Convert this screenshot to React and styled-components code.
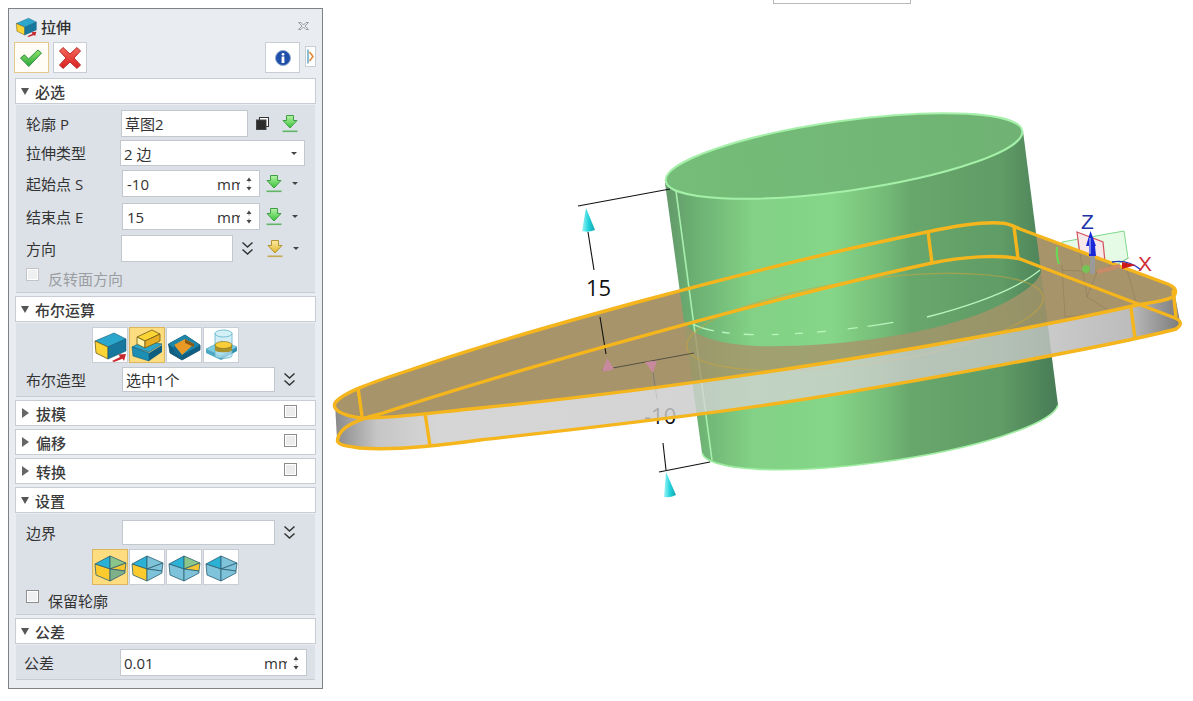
import React from "react";
import styled, { createGlobalStyle } from "styled-components";

const GlobalStyle = createGlobalStyle`
  html, body {
    margin: 0;
    padding: 0;
    background: #fff;
  }
  * {
    box-sizing: border-box;
  }
`;

const Page = styled.div`
  display: flex;
  width: 1193px;
  height: 701px;
  overflow: hidden;
  background: #fff;
  font-family: "Open Sans", "Noto Sans CJK SC", sans-serif;
  color: #333;
`;

const Panel = styled.div`
  flex: none;
  width: 315px;
  height: 681px;
  margin: 8px 0 0 8px;
  padding: 0 6px;
  background: #e9ecf0;
  border: 1px solid #7f8285;
`;

const TitleBar = styled.div`
  display: flex;
  align-items: center;
  height: 33px;
  padding-top: 1px;
`;

const Title = styled.span`
  margin-left: 4px;
  font-size: 15px;
  font-weight: 500;
  color: #2f2f2f;
`;

const Close = styled.span`
  display: flex;
  margin-left: auto;
  margin-right: 7px;
`;

const Toolbar = styled.div`
  display: flex;
  align-items: flex-start;
  gap: 4px;
  height: 36px;
  margin-left: -1px;
`;

const ToolButton = styled.div`
  display: flex;
  align-items: center;
  justify-content: center;
  width: 35px;
  height: 31px;
  background: ${(p) => (p.$active ? "#fffdf6" : "#fff")};
  border: 1px solid ${(p) => (p.$active ? "#e3c88a" : "#c9ced4")};
  margin-left: ${(p) => p.$ml || 0}px;
`;

const MiniButton = styled.div`
  display: flex;
  align-items: center;
  justify-content: center;
  width: 11px;
  height: 21px;
  margin-top: 4px;
  margin-left: 1px;
  background: #fff;
  border: 1px solid #c9ced4;
`;

const Section = styled.section`
  margin-bottom: 3px;
`;

const SectionHead = styled.div`
  display: flex;
  align-items: center;
  height: 26px;
  padding: 0 18px 0 5px;
  background: #fff;
  border: 1px solid #c8cdd3;
  font-size: 15px;
  font-weight: 500;
  color: #3a3a3a;
`;

const Arrow = styled.span`
  width: 0;
  height: 0;
  margin-right: 6px;
  ${(p) =>
    p.$open
      ? `
    margin-left: 0;
    border-left: 4.5px solid transparent;
    border-right: 4.5px solid transparent;
    border-top: 7px solid #555;
    `
      : `
    margin-left: 1px;
    border-top: 5px solid transparent;
    border-bottom: 5px solid transparent;
    border-left: 7px solid #666;
    margin-right: 7px;
    `}
`;

const HeadCheck = styled.span`
  width: 13px;
  height: 13px;
  margin-left: auto;
  margin-top: -3px;
  background: #ececec;
  border: 1px solid #8c8c8c;
  box-shadow: inset 0 0 0 1px #fff;
`;

const SectionBody = styled.div`
  height: ${(p) => p.$h}px;
  margin: 1px 1px 0;
  padding-top: ${(p) => p.$pt || 5}px;
  background: #dce1e7;
  border-bottom: 1px solid #c8cdd3;
`;

const Row = styled.div`
  display: flex;
  align-items: center;
  margin-top: ${(p) => p.$mt || 0}px;
  padding-left: ${(p) => p.$pl || 10}px;
`;

const Label = styled.span`
  flex: none;
  width: ${(p) => p.$w}px;
  font-size: 15px;
  line-height: 20px;
  color: #333;
`;

const Field = styled.div`
  display: flex;
  align-items: center;
  flex: none;
  width: ${(p) => p.$w}px;
  height: ${(p) => p.$h || 27}px;
  padding: 0 7px 0 ${(p) => p.$pad || 3}px;
  background: #fff;
  border: 1px solid #c3c8cf;
  font-size: 15px;
  color: #333;
`;

const Value = styled.span`
  flex: 1;
  white-space: nowrap;
`;

const Unit = styled.span`
  flex: none;
  width: 23px;
  overflow: hidden;
  white-space: nowrap;
`;

const Caret = styled.span`
  flex: none;
  width: 0;
  height: 0;
  margin-left: ${(p) => p.$ml || 0}px;
  border-left: 3px solid transparent;
  border-right: 3px solid transparent;
  border-top: 3px solid #444;
`;

const Slot = styled.span`
  display: flex;
  flex: none;
  margin-left: ${(p) => p.$ml || 0}px;
`;

const CheckRow = styled.div`
  display: flex;
  align-items: center;
  height: 20px;
  margin-top: ${(p) => p.$mt || 0}px;
  padding-left: 10px;
  font-size: 15px;
  color: ${(p) => (p.$muted ? "#9a9da1" : "#333")};
`;

const CheckBox = styled.span`
  width: 13px;
  height: 13px;
  margin-right: 9px;
  margin-top: -8px;
  background: #eef0f2;
  border: 1px solid ${(p) => (p.$muted ? "#c2c4c7" : "#8f8f8f")};
  box-shadow: inset 0 0 0 1px #fff;
`;

const IconGrid = styled.div`
  display: flex;
  gap: 1px;
  margin-top: ${(p) => p.$mt || 0}px;
  padding-left: 76px;
`;

const IconButton = styled.div`
  display: flex;
  align-items: center;
  justify-content: center;
  width: 36px;
  height: 36px;
  background: ${(p) => (p.$active ? "#fedc80" : "#fff")};
  border: 1px solid ${(p) => (p.$active ? "#dcb65c" : "#c9ced4")};
`;

const Viewport = styled.div`
  position: relative;
  flex: 1;
  height: 701px;

  svg {
    display: block;
  }
`;

const TopBox = styled.div`
  position: absolute;
  top: -1px;
  left: 450px;
  width: 138px;
  height: 5px;
  background: #fff;
  border: 1px solid #b9b9b9;
`;

const DownArrow = ({ color = "green" }) => {
  const c =
    color === "green"
      ? { a: "#b9f2a8", b: "#35c436", s: "#3f9e45", l: "#62b566" }
      : { a: "#fbeaa0", b: "#e2b52e", s: "#b39434", l: "#c4a94e" };
  const id = `arrow-${color}`;
  return (
    <svg width="16" height="19" viewBox="0 0 16 19">
      <defs>
        <linearGradient id={id} x1="0" y1="0" x2="0" y2="1">
          <stop offset="0" stopColor={c.a} />
          <stop offset="1" stopColor={c.b} />
        </linearGradient>
      </defs>
      <path d="M4.5 1.5H11.5V6.5H15L8 14L1 6.5H4.5Z" fill={`url(#${id})`} stroke={c.s} strokeWidth="1" />
      <rect x="0.5" y="16.5" width="15" height="1.6" fill={c.l} />
    </svg>
  );
};

const Chevrons = () => (
  <svg width="13" height="15" viewBox="0 0 13 15" fill="none" stroke="#333" strokeWidth="1.5">
    <path d="M1.5 1.5L6.5 6L11.5 1.5" />
    <path d="M1.5 8.5L6.5 13L11.5 8.5" />
  </svg>
);

const CopyIcon = () => (
  <svg width="13" height="13" viewBox="0 0 13 13">
    <rect x="3.5" y="0.5" width="9" height="9" fill="#fff" stroke="#333" />
    <rect x="0.5" y="3" width="9.5" height="9.5" fill="#2b2b2b" stroke="#444" />
  </svg>
);

const Spinner = ({ ml = 6 }) => (
  <Slot $ml={ml}>
    <svg width="6" height="16" viewBox="0 0 6 16" fill="#444">
      <path d="M3 1.5L5.5 5H0.5Z" />
      <rect x="2" y="5.5" width="2" height="0.8" fill="#999" />
      <rect x="2" y="9.7" width="2" height="0.8" fill="#999" />
      <path d="M0.5 11H5.5L3 14.5Z" />
    </svg>
  </Slot>
);

const CheckIcon = () => (
  <svg width="24" height="20" viewBox="0 0 24 20">
    <defs>
      <linearGradient id="check" x1="0" y1="0" x2="0" y2="1">
        <stop offset="0" stopColor="#8fe66a" />
        <stop offset="1" stopColor="#2aa53a" />
      </linearGradient>
    </defs>
    <path d="M1.5 10L5.5 6.8L9.5 11L19 2L22.5 5L9.8 18.5Z" fill="url(#check)" stroke="#2c8f3c" strokeWidth="1" strokeLinejoin="round" />
  </svg>
);

const CrossIcon = () => (
  <svg width="24" height="24" viewBox="0 0 24 24">
    <defs>
      <linearGradient id="cross" x1="0" y1="0" x2="0" y2="1">
        <stop offset="0" stopColor="#f56a5c" />
        <stop offset="1" stopColor="#d81f1f" />
      </linearGradient>
    </defs>
    <path d="M1.5 5L5 1.5L12 8L19 1.5L22.5 5L16 12L22.5 19L19 22.5L12 16L5 22.5L1.5 19L8 12Z" fill="url(#cross)" stroke="#b92a2a" strokeWidth="1" strokeLinejoin="round" />
  </svg>
);

const InfoIcon = () => (
  <svg width="16" height="16" viewBox="0 0 16 16">
    <circle cx="8" cy="8" r="7.5" fill="#1f4fa8" stroke="#8fa8d0" strokeWidth="1" />
    <circle cx="8" cy="4.3" r="1.4" fill="#fff" />
    <rect x="6.6" y="6.5" width="2.8" height="6.5" fill="#fff" />
  </svg>
);

const CloseIcon = () => (
  <svg width="11" height="10" viewBox="0 0 11 10" fill="none" stroke="#9a9ea3" strokeWidth="1">
    <path d="M0.5 1.5H3L5.5 4L8 1.5H10.5L7 5L10.5 8.5H8L5.5 6L3 8.5H0.5L4 5Z" />
  </svg>
);

const MiniIcon = () => (
  <svg width="7" height="15" viewBox="0 0 7 15" fill="none">
    <path d="M1 0.5V14.5" stroke="#3c8fb8" strokeWidth="1.2" />
    <path d="M2.5 3L6 7.5L2.5 12" stroke="#e08a3a" strokeWidth="1.6" />
  </svg>
);

// box with a blue top, yellow front and the small red arrow
const ExtrudeIcon = ({ size = 34 }) => (
  <svg width={size} height={size} viewBox="0 0 34 34">
    <path d="M2 13L21 5L33 11L15 19Z" fill="#2ba6cc" stroke="#0f5a78" strokeWidth="0.6" />
    <path d="M2 13L15 19V31L3 25Z" fill="#fbd535" stroke="#6e5a14" strokeWidth="0.8" />
    <path d="M15 19L33 11V23L15 31Z" fill="#17779d" stroke="#0f5a78" strokeWidth="0.6" />
    <path d="M19 33L27 29L25.5 26.5L33 26L31 33L29.5 30.8L21 34Z" fill="#c8282e" />
  </svg>
);

const AddIcon = () => (
  <svg width="34" height="34" viewBox="0 0 34 34">
    <path d="M2 19L14 13L32 16L19 24Z" fill="#2ba6cc" stroke="#0f5a78" strokeWidth="0.6" />
    <path d="M2 19L19 25V33L3 28Z" fill="#1c8db3" stroke="#0f5a78" strokeWidth="0.6" />
    <path d="M19 25L32 17V24L19 33Z" fill="#115f80" />
    <path d="M7 9L22 2L30 6L15 13Z" fill="#fbd535" stroke="#6e5a14" strokeWidth="0.8" />
    <path d="M7 9L15 13V20L7 16Z" fill="#fff4a8" stroke="#6e5a14" strokeWidth="0.8" />
    <path d="M15 13L30 6V13L15 20Z" fill="#e6ae25" stroke="#6e5a14" strokeWidth="0.8" />
  </svg>
);

const CutIcon = () => (
  <svg width="34" height="34" viewBox="0 0 34 34">
    <path d="M1.5 16L18 7L33 17V22L15 32L3 25Z" fill="#0e5f82" stroke="#0b4a66" strokeWidth="0.8" />
    <path d="M1.5 16L18 7L33 17L15 27Z" fill="#1d86ab" />
    <path d="M7 17L18 11L27 16L15 27Z" fill="#e99a25" />
    <path d="M18 11L27 16V19L18 15Z" fill="#8a5a14" />
    <path d="M7 17L15 27V30L7 25Z" fill="#14688c" />
  </svg>
);

const CommonIcon = () => (
  <svg width="34" height="34" viewBox="0 0 34 34">
    <path d="M2 21L18 13L33 19L17 28Z" fill="#7fcfe3" stroke="#3d98b5" strokeWidth="0.6" />
    <path d="M2 21L17 28V32L2 25Z" fill="#4aa7c4" />
    <path d="M17 28L33 19V23L17 32Z" fill="#2f8eae" />
    <path d="M11 5V28C11 31 28 31 28 28V5" fill="#bfe6f1" fillOpacity="0.7" stroke="#5eb2cc" strokeWidth="0.8" />
    <ellipse cx="19.5" cy="5.5" rx="8.5" ry="3.5" fill="#d3f0f7" stroke="#5eb2cc" strokeWidth="0.8" />
    <path d="M11 17V22C11 25 28 25 28 22V17Z" fill="#a8912a" />
    <ellipse cx="19.5" cy="17" rx="8.5" ry="3.5" fill="#f7cd3a" stroke="#7a6a1c" strokeWidth="0.6" />
  </svg>
);

const IsoCube = ({ a, b, c, d, e }) => (
  <svg width="34" height="34" viewBox="0 0 34 34" stroke="#2c5f72" strokeWidth="0.8">
    <path d="M2 14L17 6L17 19Z" fill={a} />
    <path d="M17 6L33 13L17 19Z" fill={b} />
    <path d="M2 14L17 19V31L3 25Z" fill={c} />
    <path d="M17 19L33 13L32 21Z" fill={d} />
    <path d="M17 19L32 21L32 23L17 31Z" fill={e} />
  </svg>
);

const blue = "#2bb0d6";
const pale = "#7fc3da";

// --- the 3D view, drawn in page coordinates ---

const topFace =
  "M335,403 C342,393 370,383 410,370 C520,332 760,266 927,232 C955,226 985,222 1000,223 C1008,223 1014,226 1020,229 L1165,283 C1174,286 1178,290 1174,296 C1170,300 1155,302 1137,305 C1050,325 900,352 780,370 C680,385 560,400 480,408 C430,413 385,419 363,418 C350,417 331,412 335,403 Z";

const bottomLoop =
  "M338,438 C340,428 355,420 380,414 C520,368 780,296 932,263 C960,257 1000,254 1020,259 L1175,318 C1182,321 1182,325 1176,329 C1130,342 900,385 780,403 C680,418 560,431 480,440 C430,447 385,450 360,448 C345,446 335,445 338,438 Z";

const band =
  "M1137,305 C1050,325 900,352 780,370 C680,385 560,400 480,408 L480,440 C560,431 680,418 780,403 C900,385 1130,342 1176,329 Z";

const Cone = ({ d, fill = "url(#cone)" }) => <path d={d} fill={fill} />;

const Scene = () => (
  <svg width="870" height="701" viewBox="323 0 870 701">
    <defs>
      <linearGradient id="cyl" gradientUnits="userSpaceOnUse" x1="665" y1="0" x2="1060" y2="0">
        <stop offset="0" stopColor="#62986a" />
        <stop offset="0.06" stopColor="#6aac70" />
        <stop offset="0.22" stopColor="#82d186" />
        <stop offset="0.42" stopColor="#85d688" />
        <stop offset="0.56" stopColor="#74ba77" />
        <stop offset="0.62" stopColor="#68a76c" />
        <stop offset="0.85" stopColor="#609c66" />
        <stop offset="1" stopColor="#477a55" />
      </linearGradient>
      <linearGradient id="cap" gradientUnits="userSpaceOnUse" x1="665" y1="0" x2="1024" y2="0">
        <stop offset="0" stopColor="#76bd79" />
        <stop offset="1" stopColor="#6fb273" />
      </linearGradient>
      <linearGradient id="band" gradientUnits="userSpaceOnUse" x1="335" y1="0" x2="1180" y2="0">
        <stop offset="0" stopColor="#8a8a8a" />
        <stop offset="0.05" stopColor="#c6c6c6" />
        <stop offset="0.12" stopColor="#d6d6d6" />
        <stop offset="0.45" stopColor="#d4d4d4" />
        <stop offset="0.85" stopColor="#c9c9c9" />
        <stop offset="0.94" stopColor="#bdbdbd" />
        <stop offset="1" stopColor="#7c7c7c" />
      </linearGradient>
      <linearGradient id="cone" x1="0" y1="0" x2="1" y2="0">
        <stop offset="0" stopColor="#9ff5f5" />
        <stop offset="0.5" stopColor="#22d3dc" />
        <stop offset="1" stopColor="#12a2ad" />
      </linearGradient>
      <clipPath id="belowArc">
        <path d="M684,320 C690,338 730,348 783,346 C860,345 950,330 1000,305 C1025,292 1040,282 1042,268 L1200,268 L1200,500 L640,500 L640,320 Z" />
      </clipPath>
    </defs>

    <path d="M1062,242 L1124,231 L1128,258 L1100,275 L1065,270 Z" fill="#e6fbe6" stroke="#7ed98a" strokeWidth="1" />
    <path d="M1077,232 L1103,242 L1105,262 L1080,255 Z" fill="#f7e8ea" stroke="#d3525c" strokeWidth="1.2" />

    <path d={bottomLoop} fill="url(#band)" />
    <path d="M335,403 L337,440 L365,420 Z" fill="url(#band)" />
    <path d="M1174,290 L1180,322 L1137,305 Z" fill="url(#band)" />
    <path d={topFace} fill="#a7946a" />

    <path d="M665,183 L702,453 A180,35 -8 0 0 1058,405 L1023,131 Z" fill="url(#cyl)" />
    <path d="M702,453 A180,35 -8 0 0 1058,405" fill="none" stroke="#9dec9f" strokeWidth="1.6" />
    <ellipse cx="844" cy="156" rx="180" ry="35" transform="rotate(-8 844 156)" fill="url(#cap)" stroke="#a4f0a8" strokeWidth="2" />
    <path d="M676,191 L712,460" stroke="#a8f0ae" strokeWidth="1.6" />

    <g clipPath="url(#belowArc)">
      <path d={topFace} fill="#a7946a" fillOpacity="0.8" />
    </g>

    <path d="M690,322 C700,330 730,337 790,334 C825,332 860,328 895,322" fill="none" stroke="#b8f5bc" strokeWidth="1.3" strokeDasharray="26 8 8 14 10 18 7 16 8 14 9 22 10 10" />
    <path d="M927,317 C950,311 1010,295 1040,270" fill="none" stroke="#b8f5bc" strokeWidth="1.3" />
    <ellipse cx="865" cy="322" rx="180" ry="42" transform="rotate(-8 865 322)" fill="none" stroke="#cda53c" strokeOpacity="0.5" strokeWidth="1.5" />

    <g fill="none" stroke="#5a5040" strokeOpacity="0.2" strokeWidth="1">
      <path d="M1062,265 L1065,317" />
      <path d="M1080,253 L1087,297 L1111,312" />
      <path d="M1062,270 L1097,272 L1130,258" />
      <path d="M1127,270 L1137,305" />
      <path d="M1097,272 L1087,297" />
      <path d="M1065,317 L1111,312" />
    </g>

    <g fill="none" stroke="#111" strokeWidth="1.1">
      <path d="M578,206 L670,189" />
      <path d="M588,232 L594,270" />
      <path d="M600,317 L606,354" />
      <path d="M663,443 L666,470" />
      <path d="M659,472 L710,462" />
    </g>
    <path d="M602,370 L694,353" stroke="#4a4a40" strokeWidth="0.9" fill="none" />
    <path d="M653,372 L657,399" stroke="#777" strokeWidth="0.9" fill="none" />
    <Cone d="M586,208 L582,231 Q588,233 595,230 Z" />
    <Cone d="M666,472 L664,497 Q670,498 676,495 Z" />
    <path d="M607,358 L602,371 Q608,372 614,369 Z" fill="#c68a9c" />
    <path d="M645,362 Q651,361 657,361 L653,373 Z" fill="#c68a9c" />

    <text x="586" y="296" fontFamily="'Open Sans', sans-serif" fontSize="22" fill="#111">15</text>
    <text x="644" y="424" fontFamily="'Open Sans', sans-serif" fontSize="22" fill="#111">-10</text>

    <path d={band} fill="url(#band)" fillOpacity="0.78" />

    <g fill="none" stroke="#f5b51c" strokeWidth="3.4" strokeLinejoin="round">
      <path d={bottomLoop} />
      <path d={topFace} />
      <path d="M358,388 L362,416" />
      <path d="M425,413 L430,446" />
      <path d="M928,232 L932,263" />
      <path d="M1014,227 L1018,258" />
      <path d="M1131,308 L1135,338" />
      <path d="M1173,290 L1176,317" />
    </g>

    <path d="M1057,247 Q1056,256 1059,264" fill="none" stroke="#66dd55" strokeWidth="2" />
    <circle cx="1086" cy="269" r="4" fill="#77c255" />
    <path d="M1097,272 L1120,266" stroke="#c98a68" strokeWidth="4" />
    <path d="M1112,262 Q1128,259 1141,270" fill="none" stroke="#2438c0" strokeWidth="1.4" />
    <path d="M1122,262 L1136,265 L1122,269 Z" fill="#cc1a1a" />
    <rect x="1090" y="256" width="5" height="18" fill="#9a9a9a" />
    <path d="M1090.5,231 L1096,246 L1095,246 L1096,256 L1089,256 L1089,246 L1086,246 Z" fill="#1a28d8" />
    <path d="M1090,238 L1090,254" stroke="#cfd6ff" strokeWidth="1" />
    <text x="1081" y="229" fontFamily="'Liberation Sans', sans-serif" fontSize="21" fill="#2232a8">Z</text>
    <text x="1138" y="271" fontFamily="'Liberation Sans', sans-serif" fontSize="21" fill="#d0303a">X</text>
  </svg>
);

const App = () => (
  <>
    <GlobalStyle />
    <Page>
      <Panel>
        <TitleBar>
          <ExtrudeIcon size={22} />
          <Title>拉伸</Title>
          <Close>
            <CloseIcon />
          </Close>
        </TitleBar>
        <Toolbar>
          <ToolButton $active>
            <CheckIcon />
          </ToolButton>
          <ToolButton>
            <CrossIcon />
          </ToolButton>
          <ToolButton $ml={174}>
            <InfoIcon />
          </ToolButton>
          <MiniButton>
            <MiniIcon />
          </MiniButton>
        </Toolbar>

        <Section>
          <SectionHead>
            <Arrow $open />
            必选
          </SectionHead>
          <SectionBody $h={188}>
            <Row>
              <Label $w={95}>轮廓 P</Label>
              <Field $w={127}>
                <Value>草图2</Value>
              </Field>
              <Slot $ml={8}>
                <CopyIcon />
              </Slot>
              <Slot $ml={13}>
                <DownArrow />
              </Slot>
            </Row>
            <Row $mt={3}>
              <Label $w={94}>拉伸类型</Label>
              <Field $w={185} $h={26}>
                <Value>2 边</Value>
                <Caret />
              </Field>
            </Row>
            <Row $mt={4}>
              <Label $w={96}>起始点 S</Label>
              <Field $w={138} $pad={4}>
                <Value>-10</Value>
                <Unit>mm</Unit>
                <Spinner />
              </Field>
              <Slot $ml={6}>
                <DownArrow />
              </Slot>
              <Caret $ml={10} />
            </Row>
            <Row $mt={6}>
              <Label $w={96}>结束点 E</Label>
              <Field $w={138} $pad={4}>
                <Value>15</Value>
                <Unit>mm</Unit>
                <Spinner />
              </Field>
              <Slot $ml={6}>
                <DownArrow />
              </Slot>
              <Caret $ml={10} />
            </Row>
            <Row $mt={5}>
              <Label $w={95}>方向</Label>
              <Field $w={112} />
              <Slot $ml={8}>
                <Chevrons />
              </Slot>
              <Slot $ml={13}>
                <DownArrow color="yellow" />
              </Slot>
              <Caret $ml={10} />
            </Row>
            <CheckRow $muted $mt={6}>
              <CheckBox $muted />
              反转面方向
            </CheckRow>
          </SectionBody>
        </Section>

        <Section>
          <SectionHead>
            <Arrow $open />
            布尔运算
          </SectionHead>
          <SectionBody $h={74} $pt={4}>
            <IconGrid>
              <IconButton>
                <ExtrudeIcon />
              </IconButton>
              <IconButton $active>
                <AddIcon />
              </IconButton>
              <IconButton>
                <CutIcon />
              </IconButton>
              <IconButton>
                <CommonIcon />
              </IconButton>
            </IconGrid>
            <Row $mt={4}>
              <Label $w={96}>布尔造型</Label>
              <Field $w={153} $h={25}>
                <Value>选中1个</Value>
              </Field>
              <Slot $ml={8}>
                <Chevrons />
              </Slot>
            </Row>
          </SectionBody>
        </Section>

        <Section>
          <SectionHead>
            <Arrow />
            拔模
            <HeadCheck />
          </SectionHead>
        </Section>
        <Section>
          <SectionHead>
            <Arrow />
            偏移
            <HeadCheck />
          </SectionHead>
        </Section>
        <Section>
          <SectionHead>
            <Arrow />
            转换
            <HeadCheck />
          </SectionHead>
        </Section>

        <Section>
          <SectionHead>
            <Arrow $open />
            设置
          </SectionHead>
          <SectionBody $h={101} $pt={6}>
            <Row>
              <Label $w={96}>边界</Label>
              <Field $w={153} $h={25} />
              <Slot $ml={8}>
                <Chevrons />
              </Slot>
            </Row>
            <IconGrid $mt={4}>
              <IconButton $active>
                <IsoCube a={blue} b="#8cc58a" c="#fbcb2e" d="#f5c531" e="#7fb08a" />
              </IconButton>
              <IconButton>
                <IsoCube a={blue} b={pale} c="#fbcb2e" d={pale} e={pale} />
              </IconButton>
              <IconButton>
                <IsoCube a={blue} b="#8cc58a" c={pale} d="#f5c531" e={pale} />
              </IconButton>
              <IconButton>
                <IsoCube a={blue} b={pale} c={pale} d={pale} e={pale} />
              </IconButton>
            </IconGrid>
            <CheckRow $mt={5}>
              <CheckBox />
              保留轮廓
            </CheckRow>
          </SectionBody>
        </Section>

        <Section>
          <SectionHead>
            <Arrow $open />
            公差
          </SectionHead>
          <SectionBody $h={35} $pt={4}>
            <Row $pl={8}>
              <Label $w={96}>公差</Label>
              <Field $w={187}>
                <Value>0.01</Value>
                <Unit>mm</Unit>
                <Spinner />
              </Field>
            </Row>
          </SectionBody>
        </Section>
      </Panel>

      <Viewport>
        <Scene />
        <TopBox />
      </Viewport>
    </Page>
  </>
);

export default App;
